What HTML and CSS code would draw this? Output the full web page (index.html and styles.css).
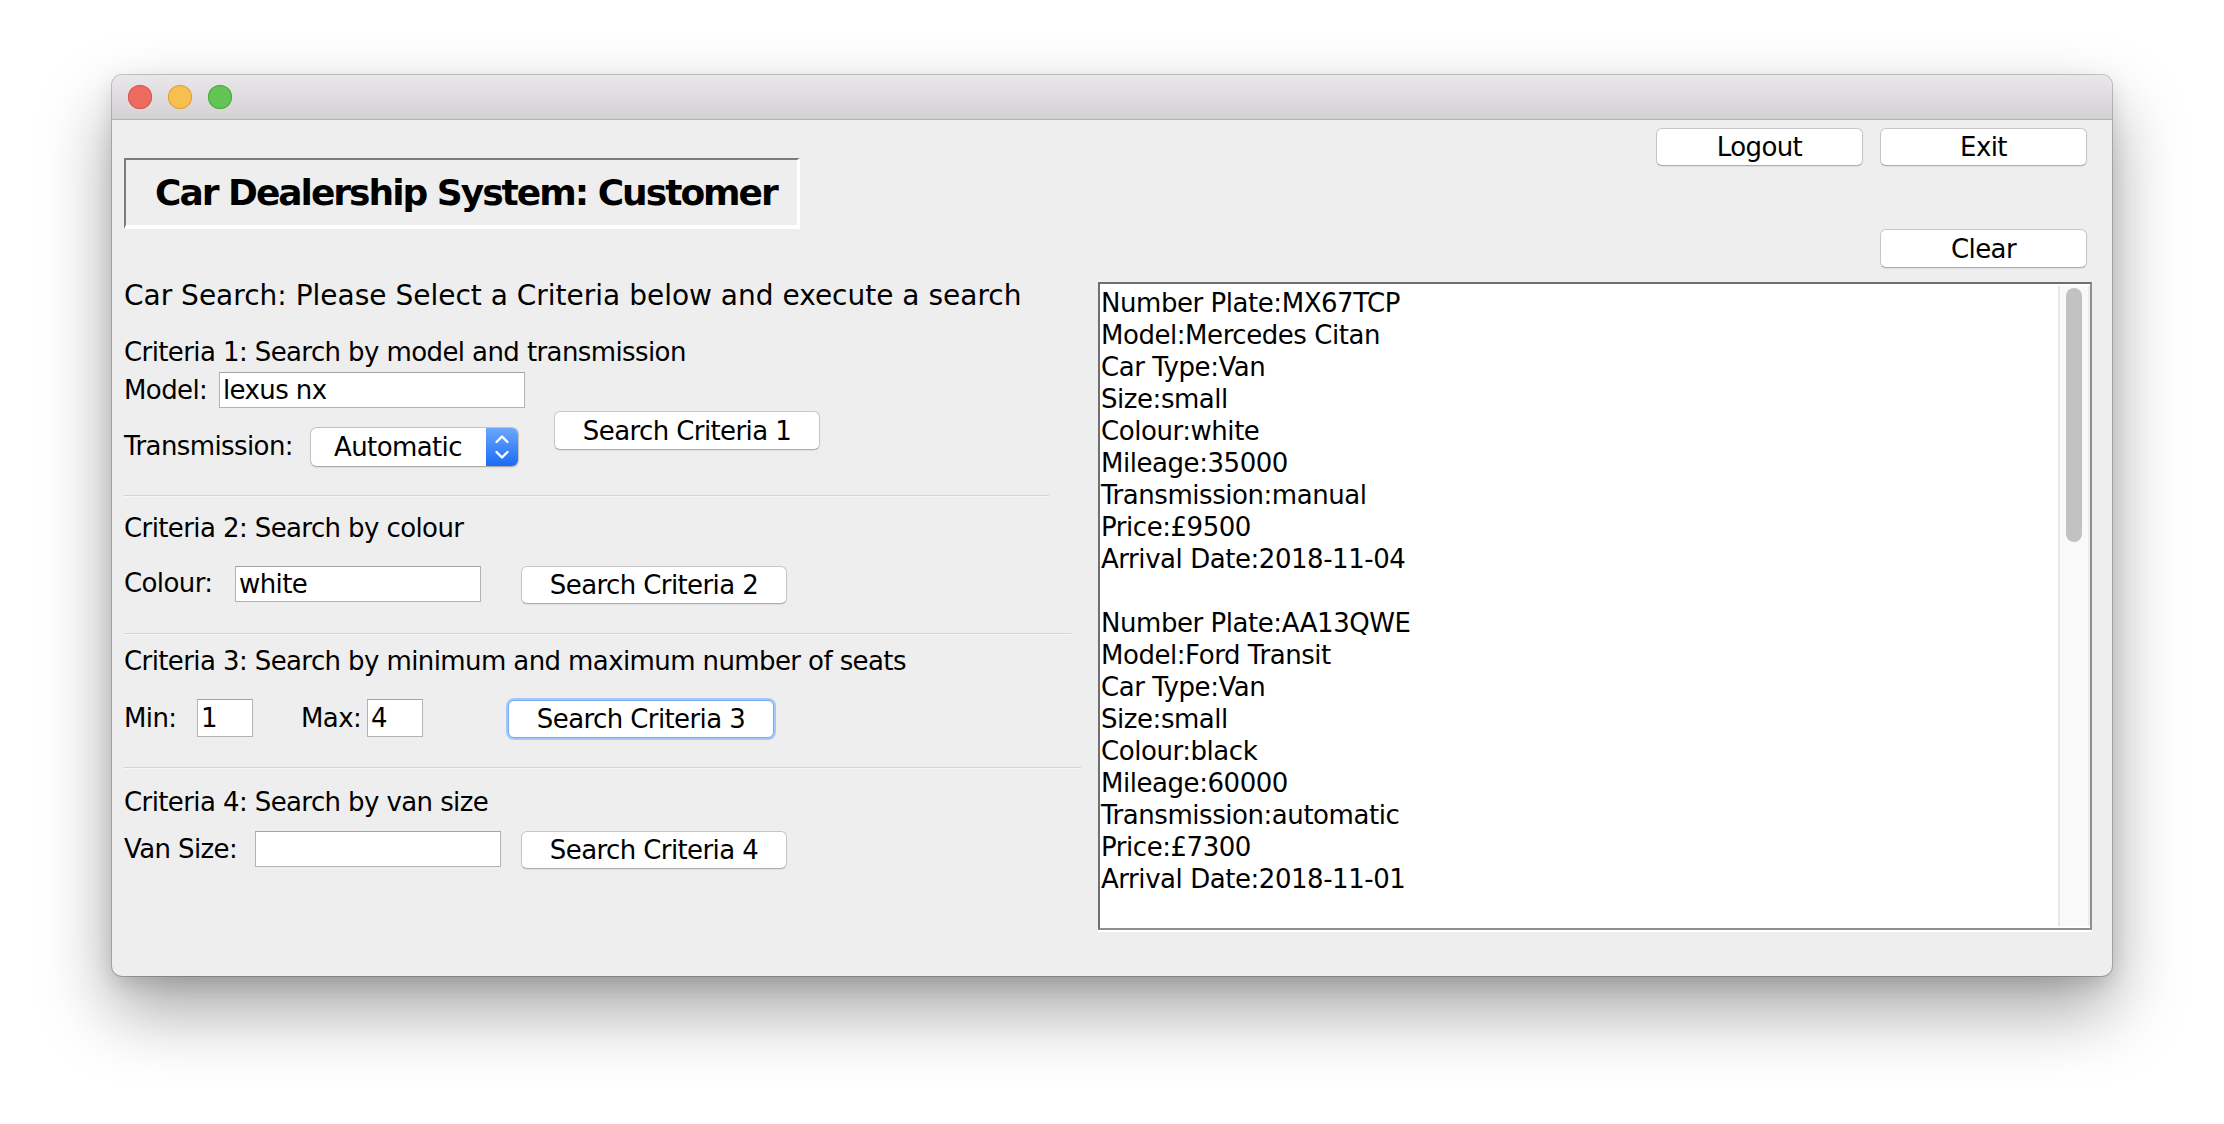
FILE: index.html
```html
<!DOCTYPE html>
<html>
<head>
<meta charset="utf-8">
<title>Car Dealership System: Customer</title>
<link rel="stylesheet" href="styles.css">
</head>
<body>
<div class="window">
  <div class="titlebar">
    <span class="light red"></span>
    <span class="light yellow"></span>
    <span class="light green"></span>
  </div>
  <div class="content">
    <div class="left">
      <div class="title-box"><h1>Car Dealership System: Customer</h1></div>
      <p class="heading">Car Search: Please Select a Criteria below and execute a search</p>

      <p class="crit c1">Criteria 1: Search by model and transmission</p>
      <div class="row row-model">
        <span class="lbl lbl-model">Model:</span>
        <div class="field f-model">lexus nx</div>
      </div>
      <div class="row row-trans">
        <span class="lbl lbl-trans">Transmission:</span>
        <div class="combo">
          <span class="combo-text">Automatic</span>
          <span class="combo-arrow">
            <svg width="16" height="38" viewBox="0 0 16 38"><path d="M2.5 14 L8 8.5 L13.5 14" fill="none" stroke="#fff" stroke-width="2.4" stroke-linecap="round" stroke-linejoin="round"/><path d="M2.5 24 L8 29.5 L13.5 24" fill="none" stroke="#fff" stroke-width="2.4" stroke-linecap="round" stroke-linejoin="round"/></svg>
          </span>
        </div>
        <button class="btn btn-c1">Search Criteria 1</button>
      </div>
      <div class="sep sep1"></div>

      <p class="crit c2">Criteria 2: Search by colour</p>
      <div class="row row-colour">
        <span class="lbl lbl-colour">Colour:</span>
        <div class="field f-wide">white</div>
        <button class="btn btn-c2">Search Criteria 2</button>
      </div>
      <div class="sep sep2"></div>

      <p class="crit c3">Criteria 3: Search by minimum and maximum number of seats</p>
      <div class="row row-min">
        <span class="lbl lbl-min">Min:</span>
        <div class="field f-small">1</div>
        <span class="lbl lbl-max">Max:</span>
        <div class="field f-small">4</div>
        <button class="btn btn-c3 focus">Search Criteria 3</button>
      </div>
      <div class="sep sep3"></div>

      <p class="crit c4">Criteria 4: Search by van size</p>
      <div class="row row-van">
        <span class="lbl lbl-van">Van Size:</span>
        <div class="field f-wide"></div>
        <button class="btn btn-c4">Search Criteria 4</button>
      </div>
    </div>

    <div class="right">
      <div class="btn-row top-row">
        <button class="btn btn-top">Logout</button>
        <button class="btn btn-top">Exit</button>
      </div>
      <div class="btn-row clear-row">
        <button class="btn btn-top">Clear</button>
      </div>
      <div class="textarea">
        <div class="ta-text">Number Plate:MX67TCP<br>Model:Mercedes Citan<br>Car Type:Van<br>Size:small<br>Colour:white<br>Mileage:35000<br>Transmission:manual<br>Price:£9500<br>Arrival Date:2018-11-04<br><br>Number Plate:AA13QWE<br>Model:Ford Transit<br>Car Type:Van<br>Size:small<br>Colour:black<br>Mileage:60000<br>Transmission:automatic<br>Price:£7300<br>Arrival Date:2018-11-01</div>
        <div class="scroll"><div class="thumb"></div></div>
      </div>
    </div>
  </div>
</div>
</body>
</html>
```
FILE: styles.css
```css
* { box-sizing: border-box; }
html, body { margin: 0; padding: 0; background: #ffffff; }
body {
  width: 2224px;
  height: 1124px;
  overflow: hidden;
  font-family: "DejaVu Sans", "Lucida Grande", sans-serif;
  color: #000;
}

.window {
  margin: 75px 0 0 112px;
  width: 2000px;
  height: 901px;
  background: #eeeeee;
  border-radius: 10px;
  box-shadow: 0 0 0 1px rgba(0,0,0,0.2), 0 34px 70px rgba(0,0,0,0.36), 0 8px 20px rgba(0,0,0,0.12);
  overflow: hidden;
  display: flex;
  flex-direction: column;
}

.titlebar {
  height: 45px;
  flex: none;
  background: linear-gradient(#e9e7e9, #d3d1d3);
  border-bottom: 1px solid #b3b3b3;
  display: flex;
  align-items: center;
  gap: 16px;
  padding-left: 16px;
}
.light { width: 24px; height: 24px; border-radius: 50%; display: block; }
.red { background: #ee6a5f; box-shadow: inset 0 0 0 1px #d5584d; }
.yellow { background: #f6bf4f; box-shadow: inset 0 0 0 1px #d9a03c; }
.green { background: #61c454; box-shadow: inset 0 0 0 1px #4ca83f; }

.content {
  flex: 1;
  display: flex;
  padding: 0 20px 0 12px;
}
.left {
  width: 974px;
  flex: none;
  display: flex;
  flex-direction: column;
  align-items: flex-start;
}
.right {
  flex: 1;
  display: flex;
  flex-direction: column;
}

.title-box {
  margin-top: 38px;
  width: 676px;
  height: 71px;
  border-style: solid;
  border-width: 2px 3px 4px 2px;
  border-color: #7b7b7b #ffffff #ffffff #7b7b7b;
  padding-left: 29px;
  display: flex;
  align-items: center;
}
.title-box h1 {
  margin: 0;
  font-size: 36px;
  font-weight: bold;
  line-height: 44px;
  letter-spacing: -2px;
  white-space: nowrap;
}

.heading {
  margin: 50px 0 0;
  font-size: 28px;
  line-height: 34px;
  letter-spacing: 0;
  white-space: nowrap;
}
.crit, .lbl, .field, .btn, .combo-text, .ta-text {
  font-size: 26px;
  letter-spacing: -0.6px;
  font-family: "DejaVu Sans", "Lucida Grande", sans-serif;
  color: #000;
}
.crit { margin: 0; line-height: 32px; white-space: nowrap; }
.c1 { margin-top: 23px; }
.c2 { margin-top: 15px; }
.c3 { margin-top: 10px; }
.c4 { margin-top: 17px; }

.row { display: flex; align-items: flex-start; }
.lbl { line-height: 32px; white-space: nowrap; flex: none; display: block; }

.field {
  flex: none;
  background: #fff;
  border: 1px solid #b4b4b4;
  border-top-color: #a4a4a4;
  height: 36px;
  line-height: 34px;
  padding-left: 3px;
  white-space: nowrap;
}
.f-model { width: 306px; }
.f-wide { width: 246px; }
.f-small { width: 56px; }

.btn {
  flex: none;
  width: 266px;
  height: 38px;
  padding: 0;
  background: #ffffff;
  border: 1px solid #c6c6c6;
  border-bottom-color: #aeaeae;
  border-radius: 6px;
  box-shadow: 0 1px 1px rgba(0,0,0,0.07);
  line-height: 36px;
  text-align: center;
  white-space: nowrap;
}
.btn.focus {
  border-color: #78a9ef;
  box-shadow: 0 0 0 2px #a6c8f6;
}

/* Criteria 1 rows */
.row-model { margin-top: 4px; height: 36px; }
.lbl-model { width: 95px; margin-top: 2px; }

.row-trans { margin-top: 3px; height: 56px; }
.lbl-trans { width: 186px; margin-top: 19px; }
.combo {
  flex: none;
  width: 209px;
  height: 40px;
  margin-top: 16px;
  background: #fff;
  border: 1px solid #c3c3c3;
  border-bottom-color: #acacac;
  border-radius: 7px;
  box-shadow: 0 1px 1px rgba(0,0,0,0.08);
  display: flex;
  overflow: hidden;
}
.combo-text { flex: 1; padding-left: 23px; line-height: 38px; white-space: nowrap; }
.combo-arrow {
  width: 32px;
  flex: none;
  background: linear-gradient(#6ba8fb, #1a6cf5);
  display: flex;
  align-items: center;
  justify-content: center;
}
.combo-arrow svg { display: block; }
.btn-c1 { margin-left: 35px; height: 39px; }

.sep { height: 2px; background: linear-gradient(#d4d4d4 50%, #f6f6f6 50%); flex: none; }
.sep1 { width: 925px; margin-top: 28px; }
.sep2 { width: 947px; margin-top: 29px; }
.sep3 { width: 957px; margin-top: 28px; }

/* Criteria 2 */
.row-colour { margin-top: 22px; height: 38px; }
.lbl-colour { width: 111px; margin-top: 1px; }
.btn-c2 { margin-left: 40px; }

/* Criteria 3 */
.row-min { margin-top: 22px; height: 40px; }
.lbl-min { width: 73px; margin-top: 3px; }
.lbl-max { width: 66px; margin-left: 48px; margin-top: 3px; }
.row-min .field { height: 38px; line-height: 36px; }
.btn-c3 { margin-left: 85px; margin-top: 1px; }

/* Criteria 4 */
.row-van { margin-top: 13px; height: 38px; }
.lbl-van { width: 131px; margin-top: 2px; }
.btn-c4 { margin-left: 20px; }

/* Right column */
.btn-row { display: flex; justify-content: flex-end; gap: 17px; padding-right: 5px; }
.top-row { margin-top: 8px; }
.clear-row { margin-top: 63px; }
.btn-top { width: 207px; }
.clear-row .btn-top { height: 39px; }

.textarea {
  margin-top: 14px;
  height: 648px;
  border: 2px solid;
  border-color: #6f6f6f #8f8f8f #8f8f8f #6f6f6f;
  background: #fff;
  box-shadow: 0 2px 0 #ffffff;
  display: flex;
}
.ta-text {
  flex: 1;
  padding: 3px 0 0 1px;
  line-height: 32px;
  letter-spacing: -0.45px;
  overflow: hidden;
  white-space: nowrap;
}
.scroll {
  width: 32px;
  flex: none;
  margin: 2px 0;
  border-left: 2px solid #e8e8e8;
  border-right: 2px solid #ececec;
  background: #f9f9f9;
  padding: 2px 0 0 6px;
}
.thumb {
  width: 16px;
  height: 254px;
  background: #c2c2c2;
  border-radius: 8px;
}
```
